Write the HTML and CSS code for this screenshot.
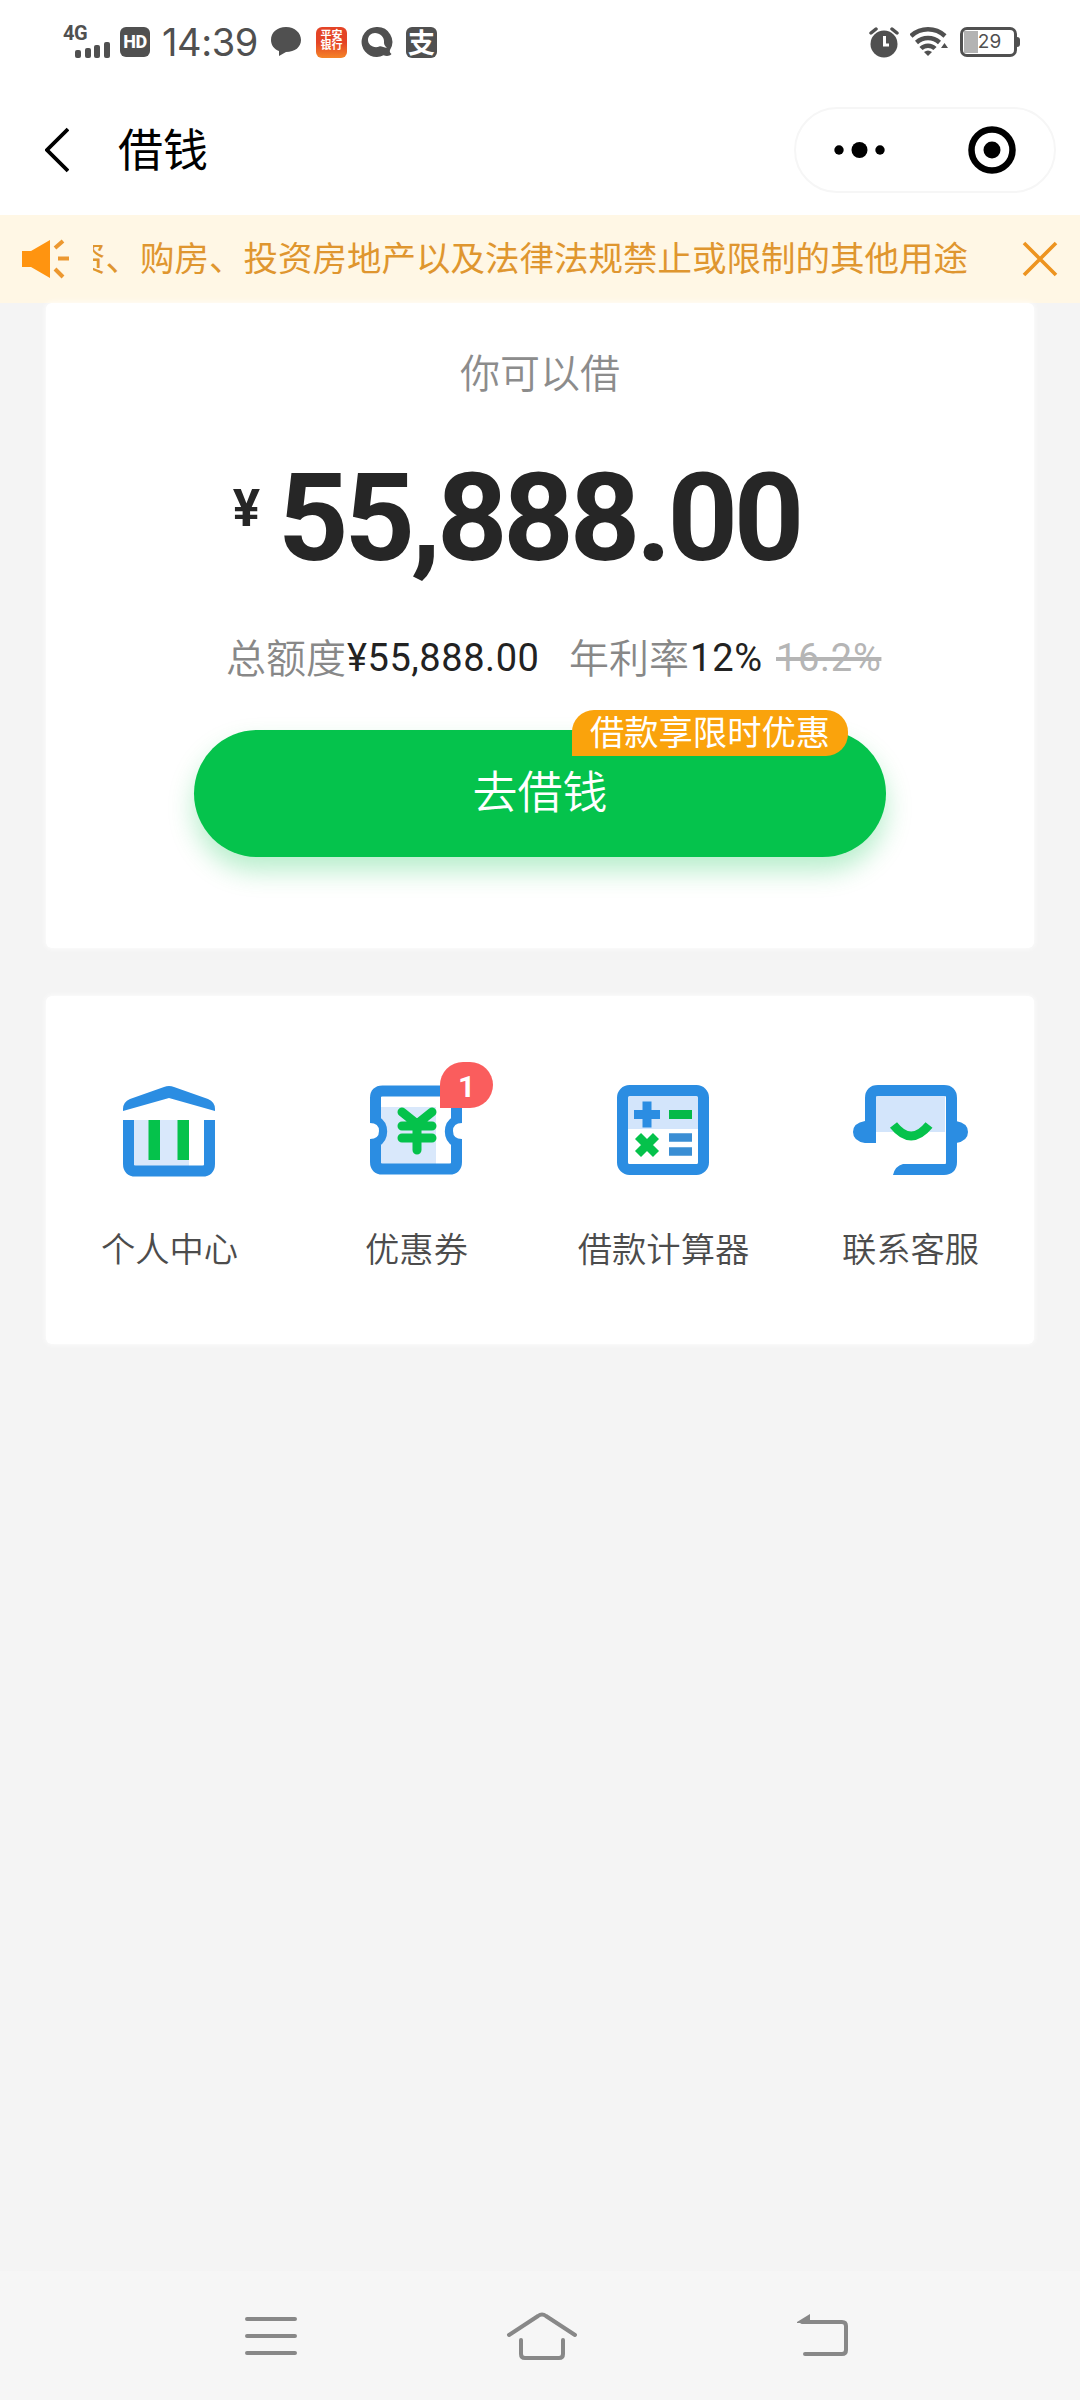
FILE: index.html
```html
<!DOCTYPE html>
<html lang="zh-CN">
<head>
<meta charset="utf-8">
<title>借钱</title>
<link rel="stylesheet" href="styles.css">
</head>
<body>
<header class="status">
  <div class="signal"><span class="net">4G</span>
    <svg width="36" height="18" viewBox="0 0 36 18"><rect x="0" y="9" width="6" height="8" rx="2"/><rect x="10" y="7" width="6" height="10" rx="2"/><rect x="19" y="4" width="6" height="13" rx="2"/><rect x="29" y="1" width="6" height="16" rx="2"/></svg>
  </div>
  <span class="hd">HD</span>
  <time class="clock">14:39</time>
  <svg class="chat" width="32" height="30" viewBox="0 0 32 30"><path d="M16 0C7 0 1 5.500 1 13c0 5 3 9 8 11v5l7-4c9 0 15-5 15-12S25 0 16 0z"/></svg>
  <span class="bank"><span>平安</span><span>银行</span></span>
  <svg class="browser" width="32" height="32" viewBox="0 0 32 32"><path fill-rule="evenodd" d="M15.500 1a15 15 0 1 0 7 28.300c3 1 6 1 8-1.300-1.500-1-2-2-1.500-4A15 15 0 0 0 15.500 1zM14 7c5 0 9 4 9 8 0 3 0 4 3 7-4-1-7-3-9-1-6 1-10-3-10-7s3-7 7-7z"/></svg>
  <span class="alipay">支</span>
  <div class="right">
    <svg width="30" height="31" viewBox="0 0 30 31"><circle cx="15" cy="17" r="13.500"/><path d="M2 6 7 2M28 6 23 2" fill="none" stroke="#505050" stroke-width="3.500" stroke-linecap="round"/><path d="M15.500 9v9H20" fill="none" stroke="#fff" stroke-width="3"/></svg>
    <svg width="38" height="30" viewBox="0 0 38 30"><g fill="none" stroke="#505050" stroke-width="4.500"><path d="M1 9a25 25 0 0 1 34 0"/><path d="M6.500 15.500a17 17 0 0 1 23 0"/><path d="M11 21.500a10 10 0 0 1 14 0"/></g><path d="M14 25q4-3 8 0l-4 4zM31 21l3.500-5 3.500 5z"/></svg>
    <span class="battery">29</span>
  </div>
</header>
<nav class="titlebar">
  <svg width="24" height="46" viewBox="0 0 24 46"><path d="M23 2 2 23l21 21" fill="none" stroke="#000" stroke-width="3.800"/></svg>
  <h1>借钱</h1>
  <div class="capsule">
    <svg width="52" height="18" viewBox="0 0 52 18"><circle cx="5" cy="9" r="4.700"/><circle cx="25.500" cy="9" r="8"/><circle cx="46" cy="9" r="4.700"/></svg>
    <i></i>
    <svg width="48" height="48" viewBox="0 0 48 48"><circle cx="24" cy="24" r="20.500" fill="none" stroke="#000" stroke-width="6.500"/><circle cx="24" cy="24" r="8.500"/></svg>
  </div>
</nav>
<div class="notice">
  <svg width="48" height="40" viewBox="0 0 48 40"><path d="M0 12h9L28 1v38L9 28H0z" fill="#ff9410"/><path d="m33 9 8-7M36 19.500h11M33 30l8 8" fill="none" stroke="#ec9830" stroke-width="4"/></svg>
  <div class="marquee"><p>资、购房、投资房地产以及法律法规禁止或限制的其他用途</p></div>
  <svg width="36" height="36" viewBox="0 0 36 36"><path d="m2 2 32 32M34 2 2 34" fill="none" stroke="#ed9420" stroke-width="3.600"/></svg>
</div>
<main>
  <section class="card loan">
    <p class="caption">你可以借</p>
    <div class="amount"><span class="yen">¥</span><span class="num">55,888.00</span></div>
    <div class="terms"><span class="label">总额度</span><span class="limit">¥55,888.00</span><span class="label rate">年利率</span><span class="now">12%</span><s>16.2%</s></div>
    <div class="borrow">去借钱<span class="tag">借款享限时优惠</span></div>
  </section>
  <section class="card menu">
    <div class="item">
      <svg width="120" height="96" viewBox="0 0 120 96"><path d="M14 30v-2q0-7 7-10L55 6q5-2 10 0l34 12q7 3 7 10v2L60 17z" fill="#2b8de2"/><path d="M25 39h55v47H25z" fill="#d9e8fb"/><path d="M19.500 39v44q0 7 7 7h67q7 0 7-7V39" fill="none" stroke="#2b8de2" stroke-width="11"/><path d="M39.500 39H51v40H39.500zM68.500 39H80v40H68.500z" fill="#05c24b"/></svg>
      <span>个人中心</span>
    </div>
    <div class="item">
      <svg width="120" height="96" viewBox="0 0 120 96"><path d="M25 26h55v57H25z" fill="#d9e8fb"/><path d="M19.500 40V17q0-7 7-7h67q7 0 7 7v23a12 12 0 0 0 0 21v20q0 7-7 7h-67q-7 0-7-7V61a12 12 0 0 0 0-21z" fill="none" stroke="#2b8de2" stroke-width="11"/><path d="M14 42q9 0 9 8t-9 8zM106 42q-9 0-9 8t9 8z" fill="#fff"/><path d="m46 31 15 12 15-12M46 45h30M46 57h30M61 43v26" fill="none" stroke="#05c24b" stroke-width="9" stroke-linecap="round" stroke-linejoin="round"/></svg>
      <b class="badge">1</b>
      <span>优惠券</span>
    </div>
    <div class="item">
      <svg width="120" height="96" viewBox="0 0 120 96"><path d="M25 15h70v33H25z" fill="#d3e5fb"/><rect x="19.500" y="9.500" width="81" height="79" rx="7" fill="none" stroke="#2b8de2" stroke-width="11"/><path d="M31 33.500h26M44 20.500v26" stroke="#2b8de2" stroke-width="9"/><path d="M66 33.500h23" stroke="#05b948" stroke-width="9"/><path d="m35 55 18 18M53 55 35 73" stroke="#05c24b" stroke-width="8.500"/><path d="M66 56.500h23M66 70.500h23" stroke="#3a8ed4" stroke-width="8.500"/></svg>
      <span>借款计算器</span>
    </div>
    <div class="item">
      <svg width="120" height="96" viewBox="0 0 120 96"><path d="M25 15h70v36H25z" fill="#d3e5fb"/><path d="M20.500 62V17q0-7.500 7.500-7.500h66q7.500 0 7.500 7.500v64q0 7.500-7.500 7.500H53" fill="none" stroke="#2b8de2" stroke-width="11"/><path d="M16 40h-1q-12 2-12 11t12 11h11V40zM106 40q12 2 12 11t-12 11zM43 94q2-9 10-11h4v11z" fill="#2b8de2"/><path d="M43.500 44Q61 66 79 44" fill="none" stroke="#05c24b" stroke-width="9"/></svg>
      <span>联系客服</span>
    </div>
  </section>
</main>
<footer class="keys">
  <svg width="52" height="44" viewBox="0 0 52 44"><path d="M2 5h48M2 22h48M2 39h48"/></svg>
  <svg class="home" width="72" height="48" viewBox="0 0 72 48"><path d="M3 23 32 4q4-3 8 0l29 19M15 28v14q0 4 4 4h34q4 0 4-4V28"/></svg>
  <svg width="52" height="44" viewBox="0 0 52 44"><path d="M9 40h37q4 0 4-4V12q0-4-4-4H6"/><path d="M1 8 14 0v9H1z" fill="#888" stroke="none"/></svg>
</footer>
</body>
</html>
```

FILE: styles.css
```css
* { box-sizing: border-box; }
body { margin: 0; width: 1080px; height: 2400px; display: flex; flex-direction: column; background: #f4f4f4; font-family: Roboto, "Noto Sans CJK SC", sans-serif; overflow: hidden; }
p, h1 { margin: 0; font-weight: 400; }
svg { display: block; flex: none; }

.status { height: 84px; padding: 0 60px 0 63px; display: flex; align-items: center; background: #fff; fill: #505050; color: #505050; }
.signal { width: 49px; height: 34px; display: flex; flex-direction: column; }
.net { font: 700 20px/16px Roboto, sans-serif; letter-spacing: -.5px; }
.signal svg { margin-left: 12px; }
.hd { width: 30px; height: 30px; margin-left: 8px; border-radius: 6px; background: #505050; color: #fff; font: 800 18px/30px Roboto, sans-serif; text-align: center; letter-spacing: -.5px; }
.clock { width: 98px; margin-left: 12px; font: 400 38px/44px Inter, sans-serif; letter-spacing: -.4px; white-space: nowrap; }
.chat { margin-left: 10px; }
.bank { width: 31px; height: 31px; margin-left: 14px; border-radius: 6px; background: linear-gradient(#e44426 50%, #f58428); color: #fff; display: flex; flex-direction: column; align-items: center; padding-top: 4px; font-size: 11px; line-height: 10px; font-weight: 700; }
.browser { margin-left: 14px; }
.alipay { width: 31px; height: 31px; margin-left: 13px; border-radius: 6px; background: #505050; color: #fff; font: 700 27px/29px "Noto Sans CJK SC", sans-serif; text-align: center; }
.right { margin-left: auto; display: flex; align-items: center; gap: 11px; }
.battery { position: relative; width: 57px; height: 30px; margin: 0 3px 0 1px; border: 3px solid #505050; border-radius: 7px; background: linear-gradient(#b3b3b3, #b3b3b3) 1px 1px / 14px 22px no-repeat; font: 400 19px/24px Inter, sans-serif; text-align: center; padding-left: 2px; }
.battery::after { content: ""; position: absolute; right: -6px; top: 7px; width: 3px; height: 10px; border-radius: 0 3px 3px 0; background: #505050; }

.titlebar { height: 131px; padding: 0 24px 0 45px; display: flex; align-items: center; background: #fff; }
.titlebar h1 { margin: 4px 0 0 49px; font-size: 45px; line-height: 60px; color: #000; }
.capsule { width: 262px; height: 86px; margin-left: auto; border: 2px solid #f6f6f6; border-radius: 43px; display: flex; align-items: center; padding: 0 38px; }
.capsule i { width: 1px; height: 48px; margin: 0 43px 0 39px; background: #ccc; }

.notice { height: 88px; padding: 0 22px; display: flex; align-items: center; background: #fff7e5; }
.marquee { width: 875px; height: 50px; margin-left: 23px; overflow: hidden; display: flex; justify-content: flex-end; color: #df962f; font-size: 34.500px; line-height: 50px; white-space: nowrap; }
.marquee p { flex: none; }
.notice > svg:last-child { margin-left: auto; }

main { display: flex; flex-direction: column; gap: 48px; padding: 0 46px; flex: 1; }
.card { background: #fff; border-radius: 6px; box-shadow: 0 0 6px #fff; }
.loan { height: 645px; display: flex; flex-direction: column; align-items: center; }
.caption { margin-top: 42px; font-size: 40px; line-height: 60px; color: #8c8c8c; font-weight: 350; }
.amount { margin-top: 41px; margin-right: 47px; height: 145px; display: flex; color: #262626; font-weight: 700; }
.yen { font-size: 51px; line-height: 125px; margin-right: 18px; }
.num { font-size: 123px; line-height: 145px; letter-spacing: -4.200px; }
.terms { align-self: flex-start; margin-left: 180px; margin-top: 39px; height: 56px; display: flex; align-items: center; font-size: 38px; color: #222; white-space: nowrap; }
.label { width: 121px; margin-top: -5px; font-size: 40px; font-weight: 350; color: #888; }
.limit { width: 222px; letter-spacing: .55px; }
.now { width: 86px; letter-spacing: .8px; }
.terms s { color: #b5b5b5; letter-spacing: .7px; text-decoration-thickness: 4px; }
.borrow { position: relative; width: 692px; height: 127px; margin-top: 44px; border-radius: 64px; background: #05c34c; box-shadow: 0 14px 26px #05c34c48; color: #fff; font-size: 45px; line-height: 127px; text-align: center; font-weight: 350; }
.tag { position: absolute; left: 378px; top: -20px; width: 276px; height: 46px; border-radius: 22px 22px 22px 0; background: #faa30c; font-size: 34.300px; line-height: 46px; font-weight: 400; }

.menu { height: 348px; padding-top: 85px; display: grid; grid-template-columns: repeat(4, 247px); align-items: start; }
.item { position: relative; display: flex; flex-direction: column; align-items: center; font-size: 34.300px; line-height: 50px; font-weight: 350; color: #4c4c4c; gap: 48px; }
.item svg { margin-right: 2px; }
.badge { position: absolute; left: 147px; top: -19px; width: 53px; height: 46px; border-radius: 25px 25px 25px 0; background: #fa5d5d; color: #fff; font: 700 30px/50px Roboto, sans-serif; text-align: center; }

.keys { height: 129px; padding: 0 232px 0 245px; display: flex; align-items: center; justify-content: space-between; background: #f6f6f6; }
.keys svg { fill: none; stroke: #888; stroke-width: 4; stroke-linecap: round; }
.keys .home { margin-right: 9px; }
```
